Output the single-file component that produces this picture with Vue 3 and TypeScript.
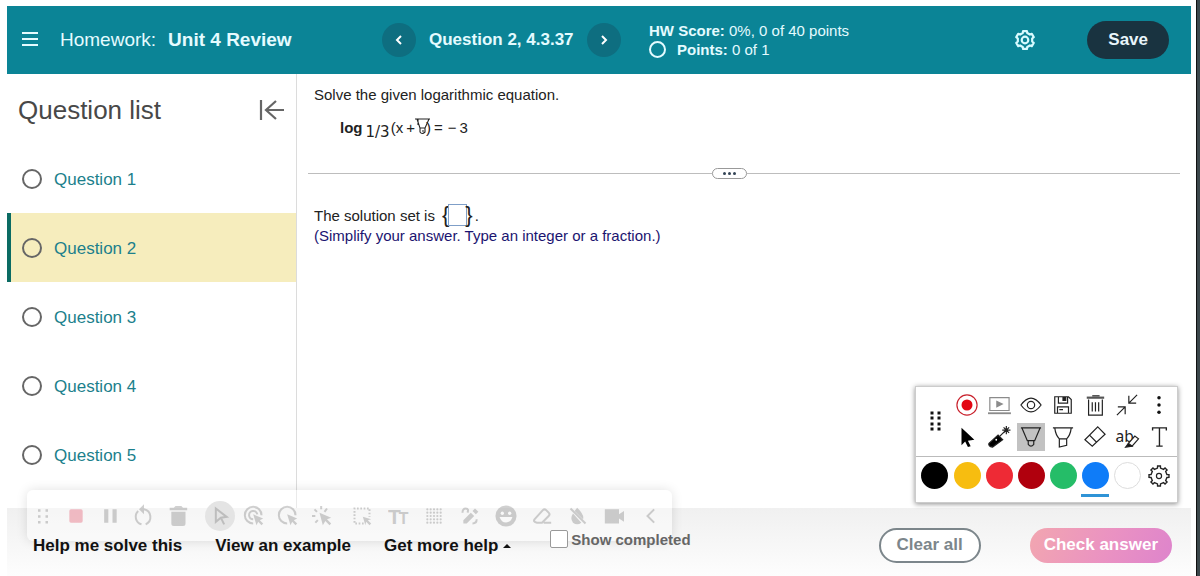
<script setup lang="ts">
import { ref } from 'vue'

interface Swatch {
  name: string
  color: string
}

const questions = [1, 2, 3, 4, 5]
const current = ref(2)
const answer = ref('')
const showCompleted = ref(false)
const ink = ref('Blue')

const swatches: Swatch[] = [
  { name: 'Black', color: '#000000' },
  { name: 'Yellow', color: '#f7bd10' },
  { name: 'Red', color: '#ee2a35' },
  { name: 'Dark red', color: '#b0000d' },
  { name: 'Green', color: '#25bd68' },
  { name: 'Blue', color: '#0f7cf8' },
  { name: 'White', color: '#ffffff' },
]

function gear(teeth: number, outer: number, inner: number, top: number, foot: number): string {
  const points: string[] = []
  const step = (Math.PI * 2) / teeth
  for (let i = 0; i < teeth; i++) {
    const a = i * step - Math.PI / 2
    const corners: [number, number][] = [
      [inner, -foot],
      [outer, -top],
      [outer, top],
      [inner, foot],
    ]
    for (const [r, offset] of corners) {
      points.push(`${(12 + r * Math.cos(a + offset * step)).toFixed(2)} ${(12 + r * Math.sin(a + offset * step)).toFixed(2)}`)
    }
  }
  return `M${points.join('L')}Z`
}

const roundGear = gear(6, 10, 8, 0.2, 0.3)
const toothGear = gear(8, 11, 8.8, 0.18, 0.24)

const dots: [number, number][] = []
for (let y = 0; y < 5; y++) for (let x = 0; x < 5; x++) dots.push([3 + x * 4, 3 + y * 4])
</script>

<template>
  <div class="app">
    <header class="top">
      <div class="title">
        <button class="plain menu" aria-label="Menu">
          <svg width="16" height="16" viewBox="0 0 16 16"><path d="M0 1h16M0 7h16M0 13h16" stroke="#e4fbff" stroke-width="2" /></svg>
        </button>
        <h1><span>Homework:</span> <b>Unit 4 Review</b></h1>
      </div>
      <nav class="pager" aria-label="Question navigation">
        <button class="round" aria-label="Previous question">
          <svg width="12" height="12" viewBox="0 0 12 12"><path d="M8 2 4 6l4 4" /></svg>
        </button>
        <b>Question 2, 4.3.37</b>
        <button class="round" aria-label="Next question">
          <svg width="12" height="12" viewBox="0 0 12 12"><path d="m4 2 4 4-4 4" /></svg>
        </button>
      </nav>
      <div class="score">
        <div><b>HW Score:</b> 0%, 0 of 40 points</div>
        <div class="points"><i class="ring"></i><span><b>Points:</b> 0 of 1</span></div>
      </div>
      <div class="actions">
        <button class="plain" aria-label="Settings">
          <svg width="22" height="22" viewBox="0 0 24 24" fill="none" stroke="#d8fbff" stroke-width="2.4" stroke-linejoin="round">
            <path :d="roundGear" /><circle cx="12" cy="12" r="3.6" />
          </svg>
        </button>
        <button class="save">Save</button>
      </div>
    </header>

    <div class="body">
      <aside class="side">
        <div class="side-head">
          <h2>Question list</h2>
          <button class="plain" aria-label="Collapse question list">
            <svg width="26" height="24" viewBox="0 0 26 24" fill="none" stroke="#666" stroke-width="2.2"><path d="M2 2v20M25 12H7M17 3l-10 9 10 9" /></svg>
          </button>
        </div>
        <ul>
          <li v-for="q in questions" :key="q" :class="{ on: q === current }">
            <i class="ring"></i>
            <a href="#" @click.prevent="current = q">Question {{ q }}</a>
          </li>
        </ul>
      </aside>

      <main class="work">
        <p>Solve the given logarithmic equation.</p>
        <div class="equation">
          <b>log</b><span class="base">1/3</span><span>(x</span><span class="plus">+</span>
          <span class="hidden-term">
            <svg width="15" height="18" viewBox="0 0 15 18" fill="none" stroke="#222" stroke-width="1.1">
              <path d="M0 1h15M2 1l3 9v4q2 3 5 0v-4l4-9M3 1v6M5 10h5" /><path d="M7 13h2" />
            </svg>)</span>
          <span class="equals">=</span><span class="minus">−</span><span>3</span>
        </div>
        <div class="divider"><button aria-label="Resize panels"><i></i><i></i><i></i></button></div>
        <div class="solution">
          <label for="answer">The solution set is</label>
          <span class="brace left">{</span><input id="answer" v-model="answer" type="text" /><span class="brace right">}</span><span class="stop">.</span>
        </div>
        <p class="hint">(Simplify your answer. Type an integer or a fraction.)</p>
      </main>
    </div>

    <div class="recorder" role="toolbar" aria-label="Screen recorder">
      <div class="group basic">
        <button class="plain" aria-label="Move">
          <svg viewBox="0 0 24 24"><path d="M6 4h3v3H6zM15 4h3v3h-3zM6 11h3v3H6zM15 11h3v3h-3zM6 18h3v3H6zM15 18h3v3h-3z" /></svg>
        </button>
        <button class="plain" aria-label="Stop"><svg viewBox="0 0 24 24"><rect x="4" y="4" width="16" height="16" rx="2" fill="#e0304c" /></svg></button>
        <button class="plain" aria-label="Pause"><svg viewBox="0 0 24 24"><path d="M5 4h5v16H5zM15 4h5v16h-5z" /></svg></button>
        <button class="plain" aria-label="Restart">
          <svg viewBox="0 0 24 24"><path class="line" d="M5 6a9.500 9.500 0 0 0 4 16M14 22a9.500 9.500 0 0 0-2-18H9" /><path d="m12-2-6 6 6 6z" /></svg>
        </button>
        <button class="plain" aria-label="Discard"><svg viewBox="0 0 24 24"><path d="M4 7h17v14q0 3-3 3H7q-3 0-3-3zM2 2h5l2-2h7l2 2h5v3H2z" /></svg></button>
      </div>
      <div class="group cursors">
        <button class="plain chosen" aria-label="Cursor"><svg viewBox="0 0 24 24"><path class="line" d="m7 3 13 10-7 1-6 5zM13 14l4 8" /></svg></button>
        <button class="plain" aria-label="Highlight clicks">
          <svg viewBox="0 0 24 24"><path class="line" d="M21 11a10 10 0 1 0-10 10M16 10a5 5 0 1 0-5 6" /><path d="m11 10 12 5-4 2 4 4-2 2-4-4-2 4z" /></svg>
        </button>
        <button class="plain" aria-label="Highlight cursor">
          <svg viewBox="0 0 24 24"><path class="line" d="M21 11a10 10 0 1 0-10 10" /><path d="m11 10 12 5-4 2 4 4-2 2-4-4-2 4z" /></svg>
        </button>
        <button class="plain" aria-label="Spotlight">
          <svg viewBox="0 0 24 24"><path class="line" d="M11 0v4M3 4l3 3M0 12h4M4 20l3-3M18 3l-3 4" /><path d="m9 8 14 6-5 2 5 5-2 2-5-5-3 5z" /></svg>
        </button>
      </div>
      <div class="group drawing">
        <button class="plain" aria-label="Select area">
          <svg viewBox="0 0 24 24"><path class="line" stroke-dasharray="2 2" d="M14 21H3V3h18v10" /><path d="m13 13 10 3-4 1 4 4-2 2-4-4-1 4z" /></svg>
        </button>
        <button class="plain" aria-label="Text"><svg viewBox="0 0 24 24"><text x="0" y="21" font-size="25">T</text><text x="13" y="21" font-size="19">T</text></svg></button>
        <button class="plain" aria-label="Blur"><svg viewBox="0 0 24 24"><circle v-for="([x, y], i) in dots" :key="i" :cx="x + 1" :cy="y + 1" r="1.3" /></svg></button>
        <button class="plain" aria-label="Draw">
          <svg viewBox="0 0 24 24"><path d="m4 17 9-9 4 4-9 9H4zM15 6l3-3 4 4-3 3z" /><path class="line" d="M3 8q0-5 4-5t2 5M15 21q5 0 5-5" /></svg>
        </button>
        <button class="plain" aria-label="Emoji">
          <svg class="big" viewBox="0 0 24 24"><circle cx="12" cy="12" r="11.5" /><circle cx="8" cy="9" r="1.8" fill="#fff" /><circle cx="16" cy="9" r="1.8" fill="#fff" /><path d="M5 13h14q-2 6-7 6t-7-6z" fill="#fff" /></svg>
        </button>
        <button class="plain" aria-label="Eraser"><svg viewBox="0 0 24 24"><path class="line" d="m3 16 10-11q2-2 4 0l3 3q2 2 0 4l-8 8H6q-5-1-3-4zM14 20h9" /></svg></button>
        <button class="plain" aria-label="Hide drawings"><svg viewBox="0 0 24 24"><path d="M11 2q9 9 7 14L8 6zM6 9l10 11q-5 4-10 0-4-5 0-11z" /><path class="line" d="m3 3 18 18" /></svg></button>
        <button class="plain" aria-label="Camera"><svg viewBox="0 0 24 24"><path d="M1 4h17v6l6-4v13l-6-4v6H1z" /></svg></button>
        <button class="plain" aria-label="Collapse"><svg viewBox="0 0 24 24"><path class="line" d="m17 4-8 8 8 8" /></svg></button>
      </div>
    </div>

    <footer class="bottom">
      <button class="plain help">Help me solve this</button>
      <button class="plain help">View an example</button>
      <button class="plain help">Get more help <i class="caret"></i></button>
      <label class="completed"><input v-model="showCompleted" type="checkbox" />Show completed</label>
      <div class="submit">
        <button class="clear">Clear all</button>
        <button class="check">Check answer</button>
      </div>
    </footer>

    <section class="palette" aria-label="Drawing tools">
      <div class="tools">
        <div class="grip"><svg viewBox="0 0 22 22"><path d="M6 1h4v4H6zM13 1h4v4h-4zM6 6h4v4H6zM13 6h4v4h-4zM6 12h4v4H6zM13 12h4v4h-4zM6 17h4v4H6zM13 17h4v4h-4z" fill="#111" stroke="#fff" stroke-width="1" /></svg></div>
        <button class="plain" aria-label="Record"><svg viewBox="0 0 24 24"><circle cx="12" cy="12" r="11" stroke="#c9222d" /><circle cx="12" cy="12" r="6" fill="#e30613" stroke="none" /></svg></button>
        <button class="plain" aria-label="Play"><svg viewBox="0 0 24 24"><path d="M2 4h21v14H2z" stroke="#8b8b8b" /><path d="M0 21h25" stroke="#8b8b8b" stroke-width="2" /><path d="m9 7 8 4-8 4z" fill="#8b8b8b" stroke="none" /></svg></button>
        <button class="plain" aria-label="Show"><svg viewBox="0 0 24 24"><path d="M1 12q11-15 22 0-11 15-22 0z" /><circle cx="12" cy="12" r="4" /></svg></button>
        <button class="plain" aria-label="Save drawing"><svg viewBox="0 0 24 24"><path d="M3 3h15l3 3v15H3zM7 3v7h10V3M6 21v-7h12v7M8 17h4" /><path d="M12 4h3v3h-3z" fill="#222" /></svg></button>
        <button class="plain" aria-label="Delete drawing"><svg viewBox="0 0 24 24"><path d="M5 6v17h15V6M9 2h8M9 9v10M12.500 9v10M16 9v10" /><path d="M3 4h19" stroke-width="2.4" stroke="#555" /></svg></button>
        <button class="plain" aria-label="Minimize"><svg viewBox="0 0 24 24"><path d="m23 1-9 9M14 2v8h8M1 23l9-9M2 14h8v8" /></svg></button>
        <button class="plain" aria-label="More"><svg viewBox="0 0 24 24"><g fill="#111" stroke="none"><circle cx="12" cy="4" r="1.9" /><circle cx="12" cy="12" r="1.9" /><circle cx="12" cy="20" r="1.9" /></g></svg></button>
        <button class="plain" aria-label="Pointer"><svg viewBox="0 0 24 24"><path d="m6 2 14 13-7 1 3 6-3 1-3-6-4 4z" fill="#000" stroke="none" /></svg></button>
        <button class="plain" aria-label="Laser pointer"><svg viewBox="0 0 24 24"><path d="m1 19 10-9 5 5L5 23q-5-1-4-4z" fill="#000" /><path d="m13 11 6-6M20 0v9M15.500 4.500h9M17 1.500l6 6M23 1.500l-6 6" /><circle cx="9" cy="15" r="1" fill="#fff" stroke="none" /></svg></button>
        <button class="plain picked" aria-label="Pen"><svg viewBox="0 0 24 24"><path d="M1 2h22M2 2l6 14h8l6-14M9 16v4q3 4 6 0v-4" /></svg></button>
        <button class="plain" aria-label="Highlighter"><svg viewBox="0 0 24 24"><path d="M1 2h22M3 2q1 8 5 12h8q4-4 5-12M8 14v9l8-2v-7" /></svg></button>
        <button class="plain" aria-label="Eraser tool"><svg viewBox="0 0 24 24"><path d="m15 1 8 8L9 22 1 15zM6 10l8 8" /></svg></button>
        <button class="plain" aria-label="Text marker"><svg class="wide" viewBox="0 0 26 24"><text x="0" y="17" font-size="17">ab</text><path d="m14 19 7-8 4 3-7 8h-4z" fill="#fff" /><path d="m11 23 3-4 4 3z" fill="#111" /></svg></button>
        <button class="plain" aria-label="Type text"><svg viewBox="0 0 24 24"><path d="M5 5V2h15v3M12.500 2v20M9 22h7" stroke-width="1.5" /></svg></button>
      </div>
      <div class="inks">
        <button v-for="s in swatches" :key="s.name" class="plain ink" :class="{ active: s.name === ink, pale: s.name === 'White' }" :aria-label="s.name" @click="ink = s.name">
          <i :style="{ background: s.color }"></i>
        </button>
        <button class="plain" aria-label="Tool settings"><svg viewBox="0 0 24 24"><path :d="toothGear" stroke-width="1.5" /><circle cx="12" cy="12" r="2.8" /></svg></button>
      </div>
    </section>
  </div>
</template>

<style>
body {
  margin: 0;
  background: #fff;
}
</style>

<style scoped>
* {
  box-sizing: border-box;
}
.app {
  position: relative;
  display: flex;
  flex-direction: column;
  min-height: 100vh;
  padding: 6px 6px 0 7px;
  border-right: 3px solid #3b474b;
  box-shadow: inset -1px 0 #111;
  font-family: 'Liberation Sans', Arial, sans-serif;
  font-size: 15px;
  color: #222;
}
button {
  font-family: inherit;
  cursor: pointer;
}
.plain {
  display: flex;
  align-items: center;
  justify-content: center;
  padding: 0;
  border: 0;
  background: none;
  color: inherit;
}
h1,
h2,
p,
ul {
  margin: 0;
  padding: 0;
  font-weight: normal;
}
.ring {
  flex: none;
  width: 20px;
  height: 20px;
  border: 2px solid #666;
  border-radius: 50%;
}
.top {
  display: grid;
  grid-template-columns: 375px 267px 1fr auto;
  align-items: center;
  height: 68px;
  padding-right: 22px;
  background: #0b8496;
  color: #e4fbff;
}
.title {
  display: flex;
  align-items: center;
  gap: 22px;
  padding-left: 15px;
}
h1 {
  display: flex;
  gap: 12px;
  font-size: 19px;
}
.pager {
  display: flex;
  align-items: center;
  gap: 13px;
  font-size: 17px;
}
.round {
  display: flex;
  align-items: center;
  justify-content: center;
  width: 34px;
  height: 34px;
  padding: 0;
  border: 0;
  border-radius: 50%;
  background: #0e6e80;
}
.round svg {
  fill: none;
  stroke: #fff;
  stroke-width: 2;
}
.score {
  line-height: 19px;
}
.points {
  display: flex;
  align-items: center;
  gap: 11px;
}
.points .ring {
  width: 17px;
  height: 17px;
  border-color: #e4fbff;
}
.actions {
  display: flex;
  align-items: center;
  gap: 51px;
}
.save {
  height: 38px;
  padding: 0 21px;
  border: 0;
  border-radius: 19px;
  background: #193340;
  color: #e9f6fb;
  font-size: 17px;
  font-weight: bold;
}
.body {
  display: flex;
  flex: 1;
}
.side {
  width: 290px;
  border-right: 1px solid #dcdcdc;
}
.side-head {
  display: flex;
  align-items: center;
  justify-content: space-between;
  height: 70px;
  padding: 2px 11px 0 11px;
}
h2 {
  font-size: 26px;
  color: #484848;
}
ul {
  list-style: none;
}
li {
  display: flex;
  align-items: center;
  gap: 12px;
  height: 69px;
  padding-left: 11px;
  border-left: 4px solid transparent;
  font-size: 17px;
}
li.on {
  border-color: #0b6b63;
  background: #f6edbd;
}
li a {
  padding-top: 2px;
  color: #1c7f8c;
  text-decoration: none;
}
.work {
  flex: 1;
  padding: 11px 11px 0 17px;
}
p {
  line-height: 20px;
}
.equation {
  display: flex;
  align-items: center;
  height: 26px;
  margin: 9px 0 0 26px;
}
.base {
  margin: 9px 1px 0 3px;
  font-family: 'DejaVu Sans', sans-serif;
}
.plus {
  margin-left: 3px;
}
.hidden-term {
  display: flex;
  align-items: center;
}
.hidden-term svg {
  margin-right: -4px;
}
.equals {
  margin: 0 5px 0 3px;
}
.minus {
  margin-right: 3px;
}
.divider {
  display: flex;
  align-items: center;
  height: 12px;
  margin: 27px 0 0 -6px;
}
.divider::before {
  content: '';
  flex: 404;
  height: 1px;
  background: #bdbdbd;
}
.divider::after {
  content: '';
  flex: 433;
  height: 1px;
  background: #bdbdbd;
}
.divider button {
  display: flex;
  align-items: center;
  justify-content: center;
  gap: 2px;
  width: 35px;
  height: 11px;
  padding: 0;
  border: 1px solid #999;
  border-radius: 6px;
  background: #fff;
}
.divider i {
  width: 3px;
  height: 3px;
  border-radius: 50%;
  background: #345;
}
.solution {
  display: flex;
  align-items: center;
  height: 22px;
  margin-top: 25px;
}
.solution input {
  width: 19px;
  height: 22px;
  padding: 0;
  border: 1px solid #7f9fc8;
  background: #fff;
  font: inherit;
}
.brace {
  font-size: 22px;
  line-height: 22px;
}
.left {
  margin: 0 -1px 0 7px;
}
.right {
  margin-left: -2px;
}
.stop {
  margin-left: 2px;
}
.hint {
  color: #1b1470;
}
.bottom {
  display: flex;
  align-items: center;
  height: 68px;
  padding: 6px 19px 0 26px;
  background: linear-gradient(#f0f0f0, #fdfdfd);
}
.bottom > * {
  position: relative;
  z-index: 2;
}
.help {
  margin-right: 33px;
  padding-top: 2px;
  color: #111;
  font-size: 17px;
  font-weight: bold;
}
.caret {
  margin-left: 5px;
  border: 4px solid transparent;
  border-top: 0;
  border-bottom: 4px solid #111;
}
.completed {
  display: flex;
  align-items: center;
  align-self: flex-start;
  gap: 3px;
  margin: 16px 0 0 6px;
  color: #666;
  font-weight: bold;
}
.completed input {
  appearance: none;
  width: 18px;
  height: 18px;
  margin: 0;
  border: 1px solid #999;
  border-radius: 2px;
  background: #fff;
}
.submit {
  display: flex;
  gap: 49px;
  margin-left: auto;
}
.submit button {
  height: 35px;
  border-radius: 18px;
  font-size: 17px;
  font-weight: bold;
}
.clear {
  padding: 0 16px;
  border: 2px solid #7c868b;
  background: #fff;
  color: #7c868b;
}
.check {
  padding: 0 14px;
  border: 0;
  background: linear-gradient(110deg, #f2a6b0, #ea92c2 55%, #de84cc);
  color: #fff;
}
.recorder {
  position: absolute;
  z-index: 1;
  left: 27px;
  bottom: 35px;
  display: flex;
  align-items: center;
  height: 51px;
  padding: 0 4px 0 0;
  border-radius: 6px;
  background: rgba(255, 255, 255, 0.4);
  box-shadow: 0 0 12px rgba(0, 0, 0, 0.12);
}
.group {
  display: grid;
  grid-auto-flow: column;
}
.basic {
  grid-template-columns: 32px;
  grid-auto-columns: 34px;
}
.cursors {
  grid-auto-columns: 34px;
  margin-left: 8px;
}
.drawing {
  grid-auto-columns: 36px;
  margin-left: 5px;
}
.recorder button {
  height: 30px;
}
.recorder svg {
  width: 20px;
  height: 20px;
  fill: #666;
  opacity: 0.3;
  overflow: visible;
}
.recorder .big {
  width: 22px;
  height: 22px;
}
.recorder .line {
  fill: none;
  stroke: #666;
  stroke-width: 2.4;
}
.recorder text {
  font-family: 'Liberation Sans', sans-serif;
  font-weight: bold;
}
.chosen {
  width: 30px;
  justify-self: center;
  border-radius: 50%;
  background: #e4e4e4;
}
.palette {
  position: absolute;
  right: 19px;
  bottom: 73px;
  border: 1px solid #ccc;
  background: #fff;
  box-shadow: 0 1px 5px rgba(0, 0, 0, 0.45);
}
.tools,
.inks {
  display: grid;
  grid-template-columns: 33px repeat(7, 32px);
  padding: 0 2px;
}
.tools {
  grid-auto-rows: 32px;
  padding-top: 2px;
  padding-bottom: 3px;
  border-bottom: 1px solid #bbb;
}
.grip {
  grid-row: span 2;
  display: flex;
  align-items: center;
  justify-content: center;
}
.inks {
  height: 45px;
  align-items: start;
}
.inks button {
  height: 37px;
}
.palette svg {
  width: 22px;
  height: 22px;
  fill: none;
  stroke: #222;
  stroke-width: 1.3;
  overflow: visible;
}
.palette .wide {
  width: 25px;
}
.palette text {
  fill: #222;
  stroke: none;
  font-family: 'Noto Sans', sans-serif;
}
.picked {
  width: 28px;
  height: 28px;
  align-self: center;
  justify-self: center;
  background: #c2c2c2;
}
.ink i {
  width: 27px;
  height: 27px;
  border-radius: 50%;
}
.pale i {
  border: 1px solid #ddd;
}
.active {
  width: 28px;
  justify-self: center;
  box-shadow: 0 3px #2f93d6;
}
</style>
